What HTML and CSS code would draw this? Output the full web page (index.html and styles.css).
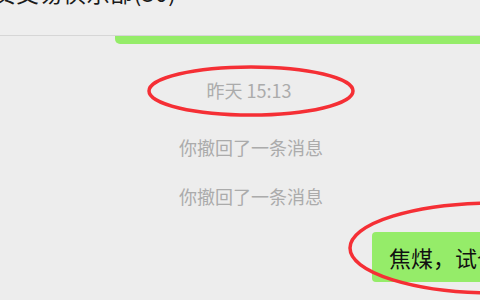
FILE: index.html
```html
<!DOCTYPE html>
<html lang="zh-CN">
<head>
<meta charset="utf-8">
<link rel="stylesheet" href="styles.css">
</head>
<body>
<div class="window">
  <header class="chat-header">
    <div class="chat-title">期货交易俱乐部(30)</div>
  </header>
  <div class="prev-bubble"></div>
  <main class="chat">
    <div class="time">昨天 15:13</div>
    <div class="notice n1">你撤回了一条消息</div>
    <div class="notice n2">你撤回了一条消息</div>
    <div class="row-out">
      <div class="bubble">焦煤，试仓多单</div>
    </div>
  </main>
  <svg class="marks" width="480" height="300" viewBox="0 0 480 300">
    <ellipse cx="251" cy="91" rx="102" ry="24" />
    <ellipse cx="496" cy="248" rx="146" ry="45" />
  </svg>
</div>
</body>
</html>
```
FILE: styles.css
```css
html, body {
  margin: 0;
  padding: 0;
}
body {
  width: 480px;
  height: 300px;
  overflow: hidden;
  background: #ededed;
  font-family: "Noto Sans CJK SC", "Noto Sans", sans-serif;
}
.window {
  position: relative;
  width: 480px;
  height: 300px;
  overflow: hidden;
  display: flex;
  flex-direction: column;
}
.chat-header {
  height: 35px;
  background: #eeeeee;
  border-bottom: 1px solid #d6d6d6;
  overflow: hidden;
  flex: none;
}
.chat-title {
  font-size: 23px;
  line-height: 23px;
  letter-spacing: 0.5px;
  margin-top: -19px;
  margin-left: -31px;
  color: #1a1a1a;
  white-space: nowrap;
}
.prev-bubble {
  flex: none;
  height: 8px;
  margin-left: 115px;
  background: #95ec69;
  border-radius: 0 0 0 5px;
}
.chat {
  display: flex;
  flex-direction: column;
  align-items: center;
  flex: 1;
  padding-left: 22px;
}
.time, .notice {
  font-size: 18px;
  line-height: 24px;
  color: #ababab;
}
.time {
  margin-top: 34px;
  margin-left: -4px;
}
.n1 {
  margin-top: 33px;
}
.n2 {
  margin-top: 25px;
}
.row-out {
  align-self: stretch;
  margin-top: 24px;
  margin-left: -22px;
  padding-left: 372px;
  white-space: nowrap;
}
.bubble {
  display: inline-block;
  height: 50px;
  line-height: 50px;
  padding: 0 17px;
  background: #95ec69;
  border-radius: 4px;
  font-size: 22px;
  color: #111111;
}
.marks {
  position: absolute;
  left: 0;
  top: 0;
  pointer-events: none;
}
.marks ellipse {
  fill: none;
  stroke: #f52f35;
  stroke-width: 3.5;
}
```
